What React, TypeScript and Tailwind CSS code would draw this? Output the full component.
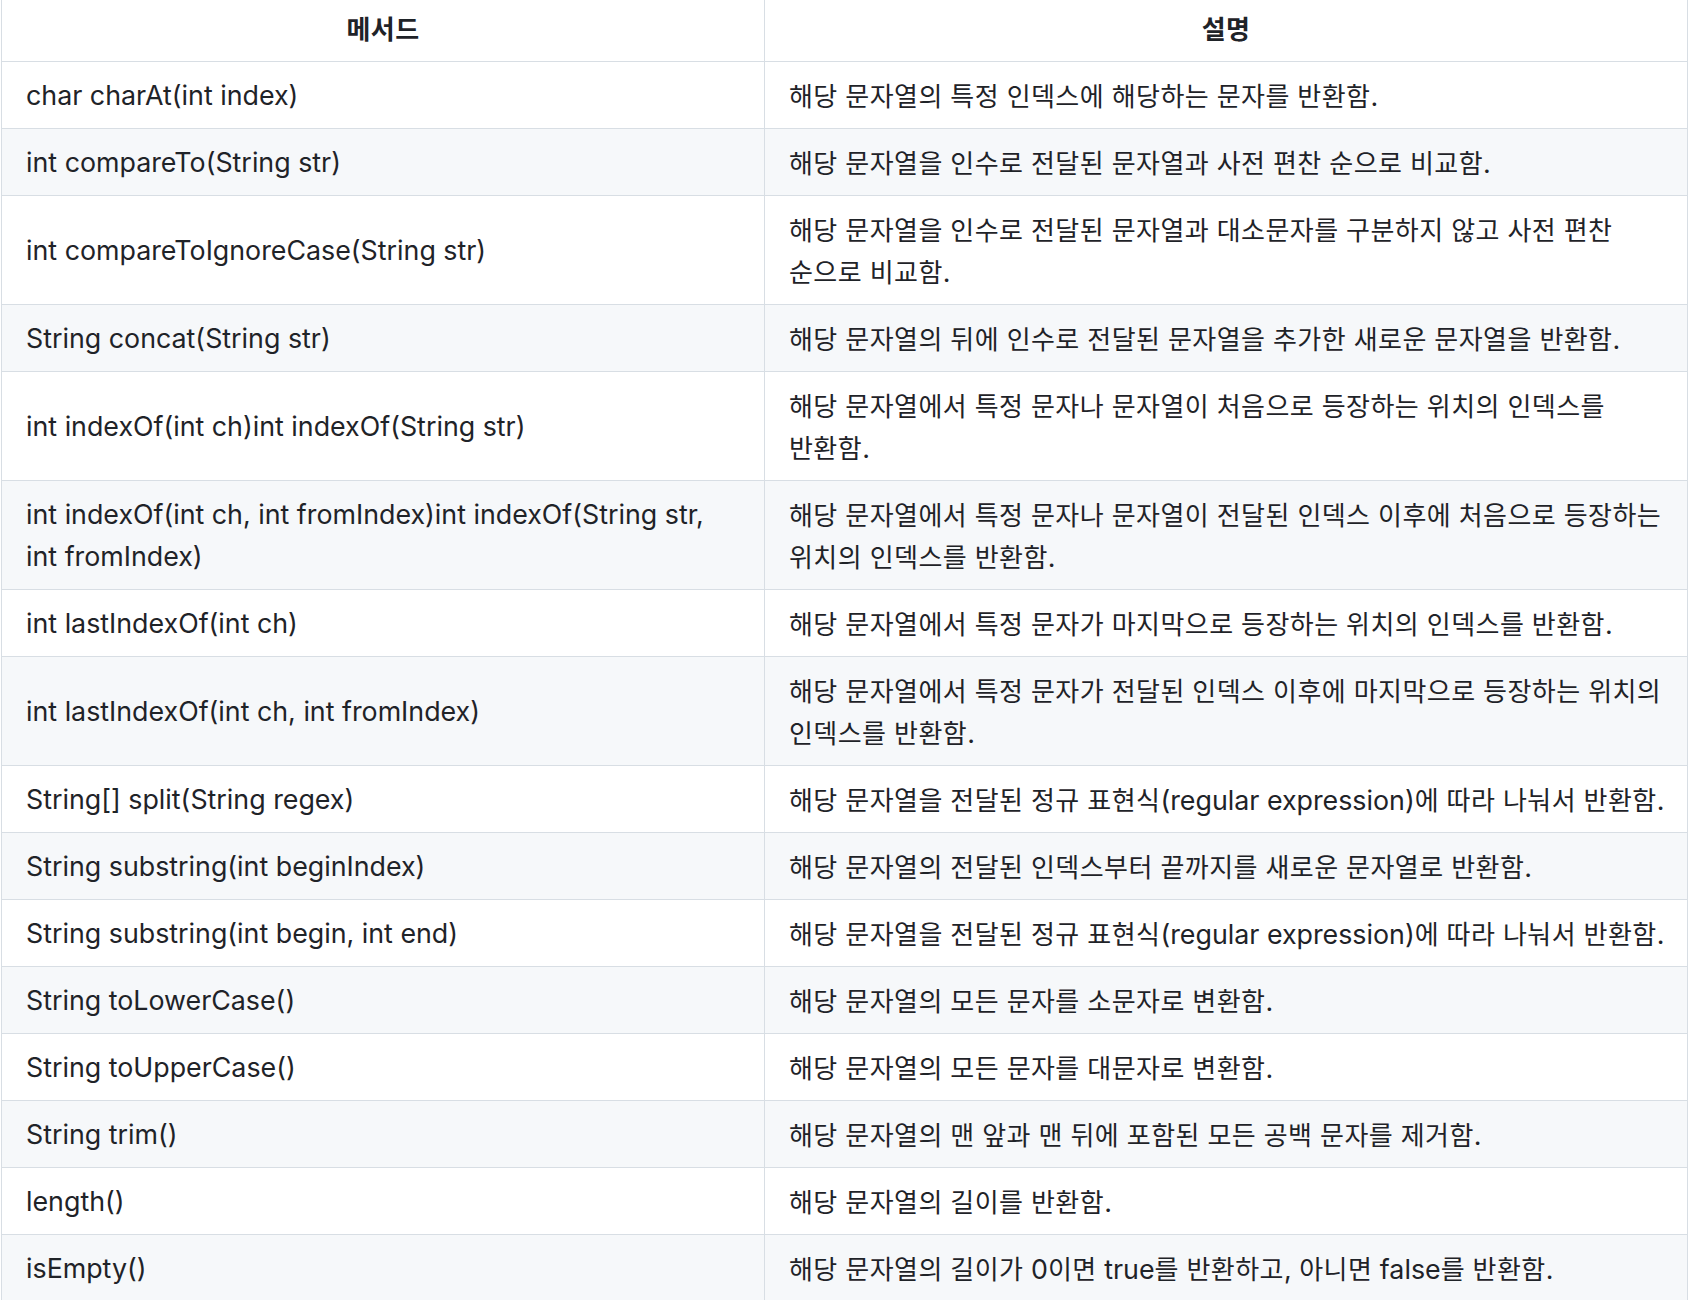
import React from "react";

type Row = { m: string[]; d: string[] };

const rows: Row[] = [
  { m: ["char charAt(int index)"], d: ["해당 문자열의 특정 인덱스에 해당하는 문자를 반환함."] },
  { m: ["int compareTo(String str)"], d: ["해당 문자열을 인수로 전달된 문자열과 사전 편찬 순으로 비교함."] },
  { m: ["int compareToIgnoreCase(String str)"], d: ["해당 문자열을 인수로 전달된 문자열과 대소문자를 구분하지 않고 사전 편찬", "순으로 비교함."] },
  { m: ["String concat(String str)"], d: ["해당 문자열의 뒤에 인수로 전달된 문자열을 추가한 새로운 문자열을 반환함."] },
  { m: ["int indexOf(int ch)int indexOf(String str)"], d: ["해당 문자열에서 특정 문자나 문자열이 처음으로 등장하는 위치의 인덱스를", "반환함."] },
  { m: ["int indexOf(int ch, int fromIndex)int indexOf(String str,", "int fromIndex)"], d: ["해당 문자열에서 특정 문자나 문자열이 전달된 인덱스 이후에 처음으로 등장하는", "위치의 인덱스를 반환함."] },
  { m: ["int lastIndexOf(int ch)"], d: ["해당 문자열에서 특정 문자가 마지막으로 등장하는 위치의 인덱스를 반환함."] },
  { m: ["int lastIndexOf(int ch, int fromIndex)"], d: ["해당 문자열에서 특정 문자가 전달된 인덱스 이후에 마지막으로 등장하는 위치의", "인덱스를 반환함."] },
  { m: ["String[] split(String regex)"], d: ["해당 문자열을 전달된 정규 표현식(regular expression)에 따라 나눠서 반환함."] },
  { m: ["String substring(int beginIndex)"], d: ["해당 문자열의 전달된 인덱스부터 끝까지를 새로운 문자열로 반환함."] },
  { m: ["String substring(int begin, int end)"], d: ["해당 문자열을 전달된 정규 표현식(regular expression)에 따라 나눠서 반환함."] },
  { m: ["String toLowerCase()"], d: ["해당 문자열의 모든 문자를 소문자로 변환함."] },
  { m: ["String toUpperCase()"], d: ["해당 문자열의 모든 문자를 대문자로 변환함."] },
  { m: ["String trim()"], d: ["해당 문자열의 맨 앞과 맨 뒤에 포함된 모든 공백 문자를 제거함."] },
  { m: ["length()"], d: ["해당 문자열의 길이를 반환함."] },
  { m: ["isEmpty()"], d: ["해당 문자열의 길이가 0이면 true를 반환하고, 아니면 false를 반환함."] },
];

function Mixed({ text }: { text: string }) {
  const parts = text.split(/([\uAC00-\uD7A3]+)/);
  return (
    <>
      {parts.map((p, i) =>
        /[\uAC00-\uD7A3]/.test(p) ? (
          <span key={i} className="font-['Noto_Sans_CJK_KR',sans-serif] text-[26px] tracking-[0.45px]">
            {p}
          </span>
        ) : (
          <span key={i}>{p}</span>
        )
      )}
    </>
  );
}

function Lines({ lines }: { lines: string[] }) {
  return (
    <>
      {lines.map((l, i) => (
        <div key={i} className="whitespace-nowrap h-[42px]">
          <Mixed text={l} />
        </div>
      ))}
    </>
  );
}

export default function App() {
  return (
    <div className="w-[1690px] h-[1300px] bg-white overflow-hidden">
      <table className="ml-px w-[1687px] border-collapse table-fixed font-['Inter','Noto_Sans_CJK_KR',sans-serif] text-[26.8px] leading-[42px] text-[#1f2328]">
        <colgroup>
          <col className="w-[763px]" />
          <col />
        </colgroup>
        <thead>
          <tr className="bg-white">
            <th className="border border-[#d8dee4] border-t-0 px-6 pt-[7px] pb-[12px] text-center font-bold">
              <Lines lines={["메서드"]} />
            </th>
            <th className="border border-[#d8dee4] border-t-0 px-6 pt-[7px] pb-[12px] text-center font-bold">
              <Lines lines={["설명"]} />
            </th>
          </tr>
        </thead>
        <tbody>
          {rows.map((r, i) => (
            <tr key={i} className={i % 2 === 1 ? "bg-[#f6f8fa]" : "bg-white"}>
              <td className="border border-[#d8dee4] px-6 py-3 align-middle text-left">
                <Lines lines={r.m} />
              </td>
              <td className="border border-[#d8dee4] px-6 py-3 align-middle text-left">
                <Lines lines={r.d} />
              </td>
            </tr>
          ))}
        </tbody>
      </table>
    </div>
  );
}
